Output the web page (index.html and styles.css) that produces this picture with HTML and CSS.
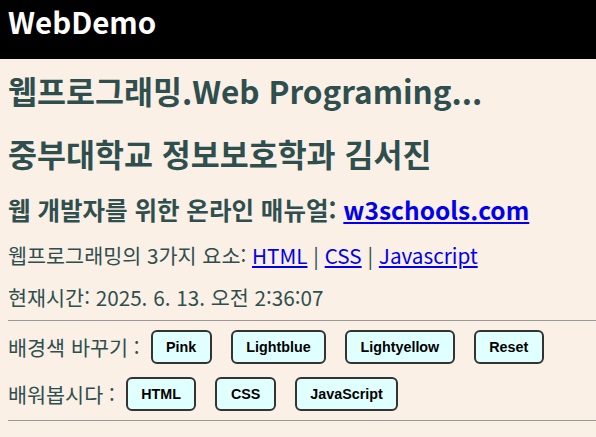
FILE: index.html
```html
<!DOCTYPE html>
<html lang="ko">
<head>
<meta charset="utf-8">
<title>WebDemo</title>
<link rel="stylesheet" href="styles.css">
</head>
<body>
<header class="topbar">
  <h1 class="brand">WebDemo</h1>
</header>
<main class="content">
  <h2 class="title">웹프로그래밍.Web Programing...</h2>
  <h2 class="title author">중부대학교 정보보호학과 김서진</h2>
  <h3 class="subtitle">웹 개발자를 위한 온라인 매뉴얼: <a href="#">w3schools.com</a></h3>
  <p class="line first">웹프로그래밍의 3가지 요소: <a href="#">HTML</a> | <a href="#">CSS</a> | <a href="#">Javascript</a></p>
  <p class="line">현재시간: 2025. 6. 13. 오전 2:36:07</p>
  <hr class="rule">
  <div class="row">
    <span class="label">배경색 바꾸기 :</span>
    <div class="buttons">
      <button class="btn">Pink</button>
      <button class="btn">Lightblue</button>
      <button class="btn">Lightyellow</button>
      <button class="btn">Reset</button>
    </div>
  </div>
  <div class="row second">
    <span class="label">배워봅시다 :</span>
    <div class="buttons">
      <button class="btn">HTML</button>
      <button class="btn">CSS</button>
      <button class="btn">JavaScript</button>
    </div>
  </div>
  <hr class="rule bottom">
</main>
</body>
</html>
```
FILE: styles.css
```css
html, body {
  margin: 0;
  padding: 0;
}
body {
  background: #faf0e6;
  color: #2f4f4f;
  font-family: "Noto Sans CJK KR", "Noto Sans", sans-serif;
}
.topbar {
  background: #000;
  height: 59px;
  padding: 0 8px;
  box-sizing: border-box;
}
.brand {
  margin: 0;
  color: #fff;
  font-size: 29.5px;
  font-weight: 700;
  line-height: 42px;
}
.content {
  padding: 0 0 0 8px;
}
.title {
  margin: 9px 0 0;
  font-size: 31.5px;
  font-weight: 700;
  line-height: 44px;
}
.title.author {
  margin-top: 19px;
}
.subtitle {
  margin: 17px 0 0;
  font-size: 24.5px;
  font-weight: 700;
  line-height: 35px;
}
.line {
  margin: 13px 0 0;
  font-size: 20.7px;
  line-height: 29px;
}
.line.first {
  margin-top: 14px;
}
a {
  color: #0000ee;
  text-decoration: underline;
}
.rule {
  margin: 8px 0 0;
  border: 0;
  border-top: 1px solid #9a9a9a;
  height: 0;
}
.rule.bottom {
  margin-top: 9px;
}
.row {
  display: flex;
  align-items: center;
  gap: 11px;
  margin-top: 9px;
}
.row.second {
  margin-top: 13px;
}
.label {
  font-size: 20.7px;
  line-height: 29px;
}
.buttons {
  display: flex;
  gap: 19px;
}
.btn {
  height: 34px;
  padding: 0 13.5px;
  background: #e0ffff;
  border: 2px solid #333;
  border-radius: 6px;
  font-family: "Liberation Sans", Arial, sans-serif;
  font-size: 14.3px;
  font-weight: 700;
  color: #000;
}
```
